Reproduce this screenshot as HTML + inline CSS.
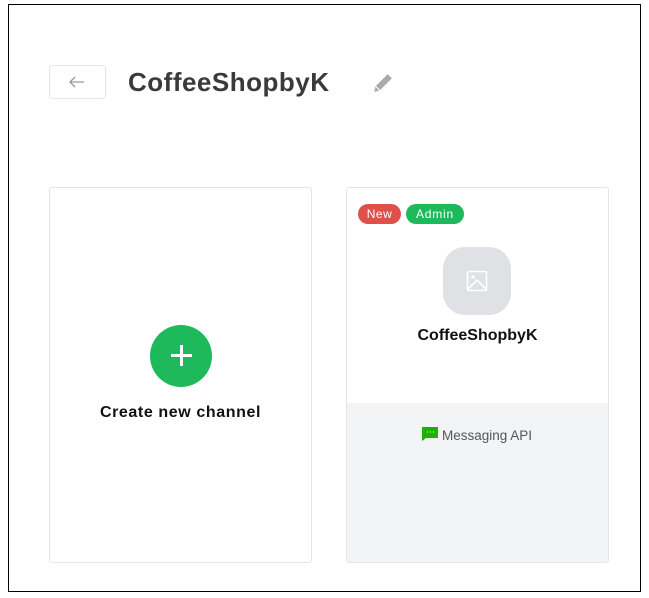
<!DOCTYPE html>
<html><head><style>
body{margin:0;width:649px;height:598px;background:#fff;position:relative;font-family:"Liberation Sans",sans-serif;overflow:hidden}
.frame{position:absolute;left:8px;top:4px;width:631px;height:586px;border:1px solid #000}
.abs{position:absolute}
.card{position:absolute;top:187px;width:261px;height:374px;border:1px solid #e3e5e8;border-radius:3px;background:#fff;overflow:hidden}
</style></head><body>
<div class="frame"></div>
<div class="abs" style="left:49px;top:65px;width:55px;height:32px;border:1px solid #e3e5e8;border-radius:3px"></div>
<svg class="abs" style="left:67px;top:74px" width="20" height="16" viewBox="0 0 20 16"><path d="M17 8H3M8 3L3 8l5 5" fill="none" stroke="#999" stroke-width="1.3"/></svg>
<div class="abs" style="left:128px;top:65px;font-size:26px;font-weight:bold;color:#3a3a3a;line-height:34px;letter-spacing:0.5px">CoffeeShopbyK</div>
<svg class="abs" style="left:372px;top:71px" width="23" height="23" viewBox="0 0 22 22"><path d="M2 20l1.5-5.5L15 3l4 4L7.5 18.5z" fill="#aaa"/><path d="M3.5 14.5l4 4" stroke="#fff" stroke-width="1"/></svg>

<div class="card" style="left:49px">
 <div class="abs" style="left:100px;top:137px;width:62px;height:62px;border-radius:50%;background:#1db95a"></div>
 <div class="abs" style="left:130px;top:157px;width:3px;height:21px;background:#fff"></div>
 <div class="abs" style="left:121px;top:166px;width:21px;height:3px;background:#fff"></div>
 <div class="abs" style="left:0;width:261px;top:216px;text-align:center;font-size:16px;font-weight:bold;color:#111;letter-spacing:0.6px">Create new channel</div>
</div>

<div class="card" style="left:346px">
 <div class="abs" style="left:11px;top:16px;width:43px;height:20px;border-radius:10px;background:#e0504a;color:#fff;font-size:12px;text-align:center;line-height:20px;letter-spacing:0.5px">New</div>
 <div class="abs" style="left:59px;top:16px;width:58px;height:20px;border-radius:10px;background:#1db95a;color:#fff;font-size:12px;text-align:center;line-height:20px;letter-spacing:0.8px">Admin</div>
 <div class="abs" style="left:96px;top:59px;width:68px;height:68px;border-radius:22px;background:#dfe1e5"></div>
 <svg class="abs" style="left:119px;top:82px" width="22" height="22" viewBox="0 0 22 22"><rect x="1.5" y="1.5" width="19" height="19" rx="1.5" fill="none" stroke="#fff" stroke-width="1.6"/><circle cx="7" cy="7" r="1.8" fill="#fff"/><path d="M2 19l9-9 9 9" fill="none" stroke="#fff" stroke-width="1.6"/></svg>
 <div class="abs" style="left:0;width:261px;top:139px;text-align:center;font-size:16px;font-weight:bold;color:#111">CoffeeShopbyK</div>
 <div class="abs" style="left:0;top:215px;width:261px;height:160px;background:#f3f4f6"></div>
 <svg class="abs" style="left:74px;top:238px" width="18" height="16" viewBox="0 0 18 16"><path d="M1 1h16v11H5l-4 3z" fill="#1db100"/><path d="M6 6h1M9 6h1M12 6h1" stroke="#fff"/></svg>
 <div class="abs" style="left:95px;top:240px;font-size:13.5px;color:#555">Messaging API</div>
</div>
</body></html>
